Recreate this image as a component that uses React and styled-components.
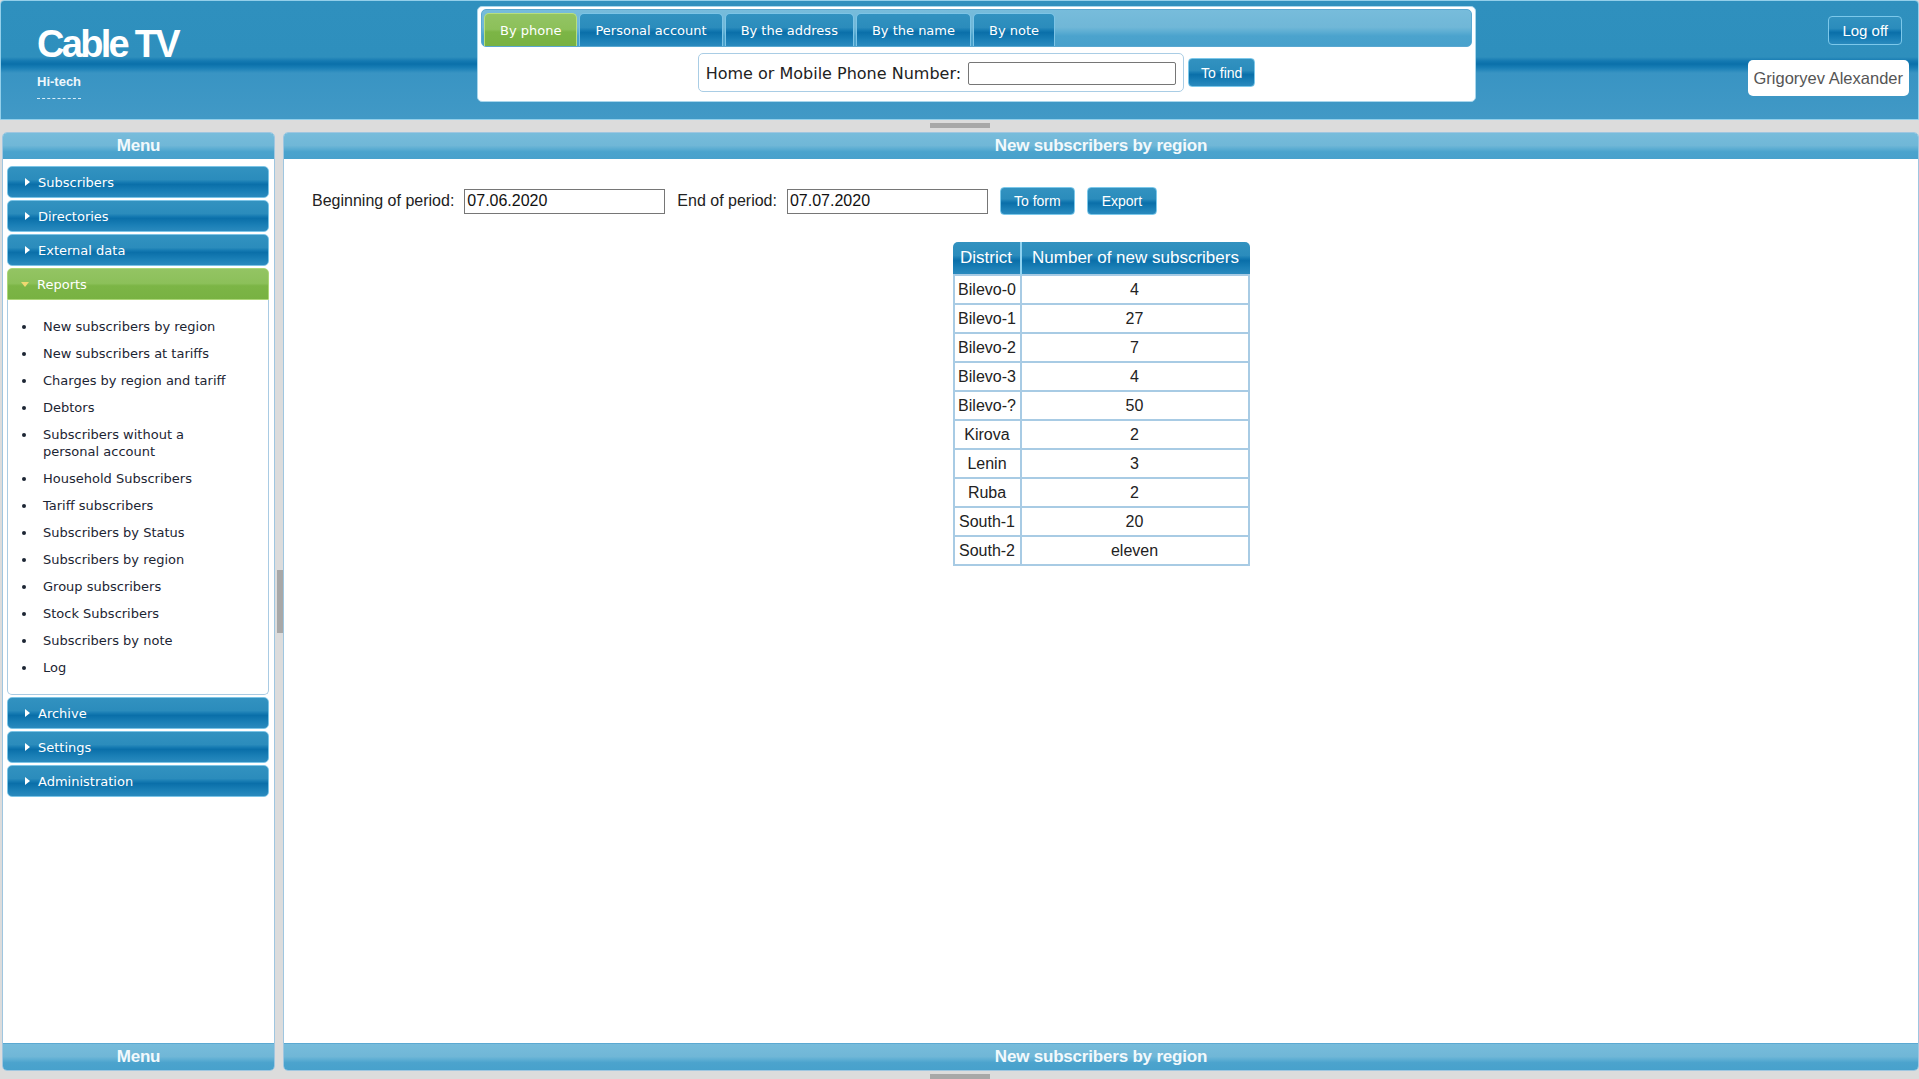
import React from "react";
import styled, { createGlobalStyle } from "styled-components";

const GlobalStyle = createGlobalStyle`
	html, body {
		margin: 0;
		padding: 0;
		height: 100%;
		overflow: hidden;
		background: #dcdcdc;
	}
	#root {
		height: 100%;
	}
`;

const sans = `"Liberation Sans", Arial, sans-serif`;
const verdana = `"DejaVu Sans", Verdana, sans-serif`;

const blueGloss = `linear-gradient(to bottom, #3292c0 0%, #2b8cbc 42%, #1479b1 52%, #0a6fa9 58%, #1a7fb6 80%, #2a8abe 100%)`;
const greenGloss = `linear-gradient(to bottom, #93c463 0%, #8cc05a 48%, #7cb546 56%, #78b242 100%)`;
const barGloss = `linear-gradient(to bottom, #77bcdb 0%, #70b7d7 48%, #5aacd2 62%, #4ba3cd 72%, #48a1cc 100%)`;

const menuSections = ["Subscribers", "Directories", "External data"];
const lowerSections = ["Archive", "Settings", "Administration"];
const reports = [
	"New subscribers by region",
	"New subscribers at tariffs",
	"Charges by region and tariff",
	"Debtors",
	"Subscribers without a personal account",
	"Household Subscribers",
	"Tariff subscribers",
	"Subscribers by Status",
	"Subscribers by region",
	"Group subscribers",
	"Stock Subscribers",
	"Subscribers by note",
	"Log",
];
const tabs = ["By phone", "Personal account", "By the address", "By the name", "By note"];
const rows = [
	["Bilevo-0", "4"],
	["Bilevo-1", "27"],
	["Bilevo-2", "7"],
	["Bilevo-3", "4"],
	["Bilevo-?", "50"],
	["Kirova", "2"],
	["Lenin", "3"],
	["Ruba", "2"],
	["South-1", "20"],
	["South-2", "eleven"],
];

function App() {
	return (
		<>
			<GlobalStyle />
			<Page>
				<Header>
					<Logo>
						<LogoTitle>Cable TV</LogoTitle>
						<LogoSub>Hi-tech</LogoSub>
						<LogoDash />
					</Logo>
					<SearchBox>
						<TabStrip>
							{tabs.map((t, i) => (
								<Tab key={t} $active={i === 0}>
									{t}
								</Tab>
							))}
						</TabStrip>
						<SearchRow>
							<SearchGroup>
								<SearchLabel>Home or Mobile Phone Number:</SearchLabel>
								<PhoneInput type="text" />
							</SearchGroup>
							<GlossButton $gap="0 0 0 4px" $pad="0 12px" $h="29px">
								To find
							</GlossButton>
						</SearchRow>
					</SearchBox>
					<UserArea>
						<GlossButton $gap="0 7px 0 0" $pad="0 13px" $h="29px" $size="15px">
							Log off
						</GlossButton>
						<UserName>Grigoryev Alexander</UserName>
					</UserArea>
				</Header>

				<HSplit>
					<Grip />
				</HSplit>

				<Body>
					<Panel $width="273px">
						<PanelBar>Menu</PanelBar>
						<MenuContent>
							{menuSections.map((s) => (
								<MenuItem key={s}>
									<ArrowRight />
									{s}
								</MenuItem>
							))}
							<MenuItem $open>
								<ArrowDown />
								Reports
							</MenuItem>
							<ReportList>
								{reports.map((r) => (
									<ReportItem key={r}>
										<span>{r}</span>
									</ReportItem>
								))}
							</ReportList>
							{lowerSections.map((s) => (
								<MenuItem key={s} $after>
									<ArrowRight />
									{s}
								</MenuItem>
							))}
						</MenuContent>
						<PanelBar $bottom>Menu</PanelBar>
					</Panel>

					<VSplit>
						<VGrip />
					</VSplit>

					<Panel>
						<PanelBar>New subscribers by region</PanelBar>
						<MainContent>
							<FormRow>
								<FieldLabel>Beginning of period:</FieldLabel>
								<DateInput defaultValue="07.06.2020" />
								<FieldLabel>End of period:</FieldLabel>
								<DateInput defaultValue="07.07.2020" />
								<GlossButton $gap="0 12px 0 0" $pad="0 13px" $h="28px">
									To form
								</GlossButton>
								<GlossButton $pad="0 14px" $h="28px">
									Export
								</GlossButton>
							</FormRow>
							<Report>
								<thead>
									<tr>
										<HeadCell $w="69px">District</HeadCell>
										<HeadCell>Number of new subscribers</HeadCell>
									</tr>
								</thead>
								<tbody>
									{rows.map(([d, n]) => (
										<tr key={d}>
											<Cell>{d}</Cell>
											<Cell>{n}</Cell>
										</tr>
									))}
								</tbody>
							</Report>
						</MainContent>
						<PanelBar $bottom>New subscribers by region</PanelBar>
					</Panel>
				</Body>

				<HSplit $bottom>
					<Grip />
				</HSplit>
			</Page>
		</>
	);
}

export default App;

const Page = styled.div`
	display: flex;
	flex-direction: column;
	height: 1079px;
	width: 1919px;
`;

const Header = styled.header`
	flex: 0 0 120px;
	box-sizing: border-box;
	display: flex;
	border: 1px solid #93cfea;
	border-radius: 4px 4px 0 0;
	background: linear-gradient(
		to bottom,
		#2f90be 0px,
		#2e8fbd 56px,
		#1479b1 60px,
		#0a70aa 63px,
		#1a7fb6 67px,
		#3994c3 72px,
		#4199c6 100%
	);
`;

const Logo = styled.div`
	flex: 0 0 476px;
	box-sizing: border-box;
	padding: 21px 0 0 36px;
	color: #fff;
	font-family: ${sans};
`;

const LogoTitle = styled.div`
	font-size: 38px;
	line-height: 44px;
	font-weight: bold;
	letter-spacing: -2.7px;
`;

const LogoSub = styled.div`
	margin-top: 8px;
	font-size: 13px;
	line-height: 16px;
	font-weight: bold;
	color: #eef7fc;
`;

const LogoDash = styled.div`
	width: 44px;
	margin-top: 8px;
	border-top: 1px dashed #d7ecf7;
`;

const SearchBox = styled.div`
	width: 999px;
	height: 96px;
	box-sizing: border-box;
	margin-top: 5px;
	padding: 2px 3px;
	background: #fff;
	border: 1px solid #a9d6ec;
	border-radius: 5px;
`;

const TabStrip = styled.div`
	display: flex;
	align-items: flex-end;
	gap: 2px;
	height: 38px;
	box-sizing: border-box;
	padding-left: 2px;
	border: 1px solid #5aa8d1;
	border-radius: 5px;
	background: ${barGloss};
`;

const Tab = styled.div`
	display: flex;
	align-items: center;
	height: 33px;
	box-sizing: border-box;
	padding: 0 15px;
	border: 1px solid ${(p) => (p.$active ? "#b7de7f" : "#7cc4e6")};
	border-bottom: none;
	border-radius: 5px 5px 0 0;
	background: ${(p) => (p.$active ? greenGloss : blueGloss)};
	color: #fff;
	font-family: ${verdana};
	font-size: 13px;
	white-space: nowrap;
`;

const SearchRow = styled.div`
	display: flex;
	justify-content: center;
	align-items: center;
	margin-top: 6px;
`;

const SearchGroup = styled.div`
	display: flex;
	align-items: center;
	gap: 7px;
	height: 39px;
	box-sizing: border-box;
	padding: 2px 7px 0 7px;
	border: 1px solid #a9cde5;
	border-radius: 5px;
`;

const SearchLabel = styled.span`
	font-family: ${verdana};
	font-size: 16px;
	color: #222;
	white-space: nowrap;
`;

const PhoneInput = styled.input`
	width: 208px;
	height: 23px;
	box-sizing: border-box;
	border: 1px solid #767676;
	border-radius: 2px;
	outline: none;
`;

const GlossButton = styled.button`
	height: ${(p) => p.$h || "28px"};
	margin: ${(p) => p.$gap || "0"};
	padding: ${(p) => p.$pad || "0 12px"};
	border: 1px solid #7cc8ea;
	border-radius: 4px;
	background: ${blueGloss};
	color: #fff;
	font-family: ${sans};
	font-size: ${(p) => p.$size || "14px"};
	white-space: nowrap;
	cursor: pointer;
`;

const UserArea = styled.div`
	flex: 1;
	display: flex;
	flex-direction: column;
	align-items: flex-end;
	padding: 15px 9px 0 0;
`;

const UserName = styled.div`
	display: flex;
	align-items: center;
	height: 36px;
	margin-top: 15px;
	padding: 0 6px;
	background: #fff;
	border-radius: 5px;
	color: #555;
	font-family: ${sans};
	font-size: 16.5px;
	white-space: nowrap;
`;

const HSplit = styled.div`
	flex: 0 0 ${(p) => (p.$bottom ? "7px" : "12px")};
	display: flex;
	justify-content: center;
	align-items: ${(p) => (p.$bottom ? "flex-end" : "flex-start")};
`;

const Grip = styled.div`
	width: 60px;
	height: 5px;
	margin-top: 3px;
	background: #a8a8a8;
`;

const Body = styled.div`
	flex: 1;
	display: flex;
	min-height: 0;
	padding-left: 2px;
`;

const Panel = styled.section`
	display: flex;
	flex-direction: column;
	${(p) => (p.$width ? `width: ${p.$width};` : "flex: 1;")}
	box-sizing: border-box;
	background: #fff;
	border: 1px solid #9fc6e0;
	border-radius: 5px;
	overflow: hidden;
`;

const PanelBar = styled.div`
	flex: 0 0 26px;
	${(p) => p.$bottom && "margin-top: auto; border-top: 1px solid #5ba9d2;"}
	background: ${barGloss};
	color: #f2f9fc;
	font-family: ${sans};
	font-size: 17px;
	font-weight: bold;
	letter-spacing: -0.2px;
	line-height: 26px;
	text-align: center;
`;

const VSplit = styled.div`
	flex: 0 0 8px;
	display: flex;
	justify-content: flex-end;
	align-items: center;
`;

const VGrip = styled.div`
	width: 6px;
	height: 63px;
	background: #a8a8a8;
`;

const MenuContent = styled.div`
	display: flex;
	flex-direction: column;
	padding: 7px 5px 0 4px;
`;

const MenuItem = styled.div`
	display: flex;
	align-items: center;
	height: 32px;
	box-sizing: border-box;
	margin: ${(p) => (p.$after ? "2px 0 0" : p.$open ? "0" : "0 0 2px")};
	padding-left: 17px;
	border: 1px solid ${(p) => (p.$open ? "#acd678" : "#7cc4e6")};
	border-radius: ${(p) => (p.$open ? "5px 5px 0 0" : "5px")};
	background: ${(p) => (p.$open ? greenGloss : blueGloss)};
	color: #fff;
	font-family: ${verdana};
	font-size: 13px;
`;

const ArrowRight = styled.span`
	width: 0;
	height: 0;
	margin-right: 8px;
	border-top: 4px solid transparent;
	border-bottom: 4px solid transparent;
	border-left: 5px solid #fff;
`;

const ArrowDown = styled.span`
	width: 0;
	height: 0;
	margin: 0 8px 0 -4px;
	border-left: 4.5px solid transparent;
	border-right: 4.5px solid transparent;
	border-top: 5px solid #efd870;
`;

const ReportList = styled.ul`
	list-style: none;
	margin: 0;
	padding: 18px 31px 8px 14px;
	border: 1px solid #a9cbe3;
	border-top: none;
	border-radius: 0 0 5px 5px;
`;

const ReportItem = styled.li`
	display: flex;
	margin-bottom: 10px;
	color: #1c2533;
	font-family: ${verdana};
	font-size: 13px;
	line-height: 17px;

	&::before {
		content: "";
		flex: 0 0 4px;
		height: 4px;
		margin: 7px 17px 0 0;
		border-radius: 50%;
		background: #1c2533;
	}
`;

const MainContent = styled.div`
	padding: 28px;
`;

const FormRow = styled.div`
	display: flex;
	align-items: center;
`;

const FieldLabel = styled.label`
	margin-right: 10px;
	color: #222;
	font-family: ${sans};
	font-size: 16px;
	white-space: nowrap;
`;

const DateInput = styled.input`
	width: 201px;
	height: 25px;
	box-sizing: border-box;
	margin-right: 12px;
	padding: 0 2px;
	border: 1px solid #767676;
	color: #111;
	font-family: ${sans};
	font-size: 16px;
	outline: none;
`;

const Report = styled.table`
	width: 297px;
	margin: 27px auto 0;
	table-layout: fixed;
	border-collapse: separate;
	border-spacing: 0;
	font-family: ${sans};
`;

const HeadCell = styled.th`
	${(p) => p.$w && `width: ${p.$w};`}
	box-sizing: border-box;
	height: 34px;
	padding: 0;
	border-bottom: 2px solid #a8cbe4;
	background: ${blueGloss};
	color: #fff;
	font-size: 17px;
	font-weight: normal;
	white-space: nowrap;

	&:first-child {
		border-right: 2px solid #8fd2f0;
		border-top-left-radius: 5px;
	}
	&:last-child {
		border-top-right-radius: 5px;
	}
`;

const Cell = styled.td`
	padding: 0;
	border-bottom: 2px solid #a8cbe4;
	border-right: 2px solid #a8cbe4;
	color: #222;
	font-size: 16px;
	line-height: 27px;
	text-align: center;

	&:first-child {
		border-left: 2px solid #a8cbe4;
	}
`;
